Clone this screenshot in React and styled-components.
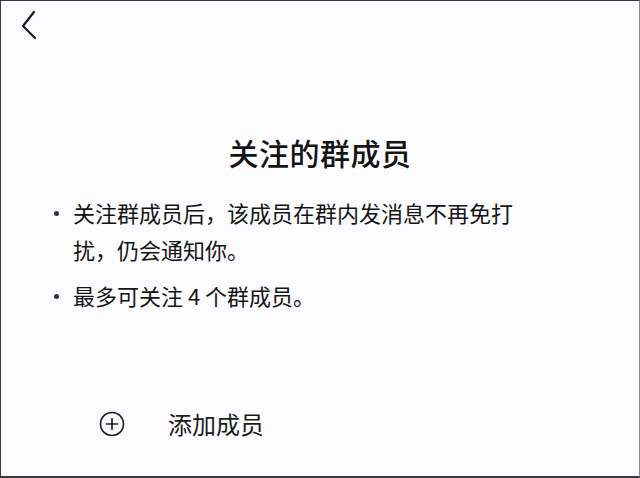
import React from 'react'
import styled, { createGlobalStyle } from 'styled-components'

const GlobalStyle = createGlobalStyle`
  html, body {
    margin: 0;
    padding: 0;
    background: #fcfcfe;
  }
  body {
    font-family: "Noto Sans CJK SC", "Noto Sans", sans-serif;
    color: #141414;
  }
`

const Frame = styled.div`
  box-sizing: border-box;
  width: 640px;
  height: 478px;
  display: flex;
  flex-direction: column;
  background: #fcfcfe;
  border-top: 1px solid #3a3a3a;
  border-left: 1px solid #3a3a3a;
  border-right: 1px solid #8a8a8a;
  border-bottom: 2px solid #3a3a3a;
  overflow: hidden;
`

const Header = styled.div`
  padding: 9px 0 0 19px;
  height: 39px;
  box-sizing: border-box;
`

const BackButton = styled.button`
  display: block;
  padding: 0;
  border: 0;
  background: none;
  width: 18px;
  height: 30px;
  cursor: pointer;
`

const Title = styled.h1`
  margin: 92px 0 0;
  font-size: 30px;
  line-height: 40px;
  font-weight: 500;
  text-align: center;
  letter-spacing: 0.5px;
`

const List = styled.ul`
  list-style: none;
  margin: 22px 0 0;
  padding: 0 0 0 53px;
  display: flex;
  flex-direction: column;
  gap: 9px;
`

const Item = styled.li`
  display: flex;
  align-items: flex-start;
  font-size: 22px;
  line-height: 37px;
`

const Dot = styled.span`
  flex: none;
  width: 5px;
  height: 5px;
  border-radius: 50%;
  background: #333;
  margin: 17px 14px 0 0;
`

const ItemText = styled.span`
  width: 450px;
`

const AddRow = styled.button`
  display: flex;
  align-items: center;
  gap: 43px;
  margin: 89px 0 0;
  padding: 0 0 0 98px;
  height: 40px;
  border: 0;
  background: none;
  font-family: inherit;
  font-size: 24px;
  color: #1a1a1a;
  text-align: left;
  cursor: pointer;
`

const PlusIcon = () => (
  <svg width="26" height="26" viewBox="0 0 26 26" fill="none" stroke="#1a1a1a" strokeWidth="1.6" strokeLinecap="round">
    <circle cx="13" cy="14" r="11.5" />
    <path d="M13 8.5v11M7.5 14h11" />
  </svg>
)

const items = [
  '关注群成员后，该成员在群内发消息不再免打扰，仍会通知你。',
  '最多可关注 4 个群成员。',
]

export default function App() {
  return (
    <>
      <GlobalStyle />
      <Frame>
        <Header>
          <BackButton aria-label="返回">
            <svg width="18" height="30" viewBox="0 0 18 30" fill="none" stroke="#1a1a1a" strokeWidth="2.2" strokeLinecap="round" strokeLinejoin="round">
              <path d="M14 2L3 16l12 12" />
            </svg>
          </BackButton>
        </Header>
        <Title>关注的群成员</Title>
        <List>
          {items.map((text) => (
            <Item key={text}>
              <Dot />
              <ItemText>{text}</ItemText>
            </Item>
          ))}
        </List>
        <AddRow>
          <PlusIcon />
          <span>添加成员</span>
        </AddRow>
      </Frame>
    </>
  )
}
